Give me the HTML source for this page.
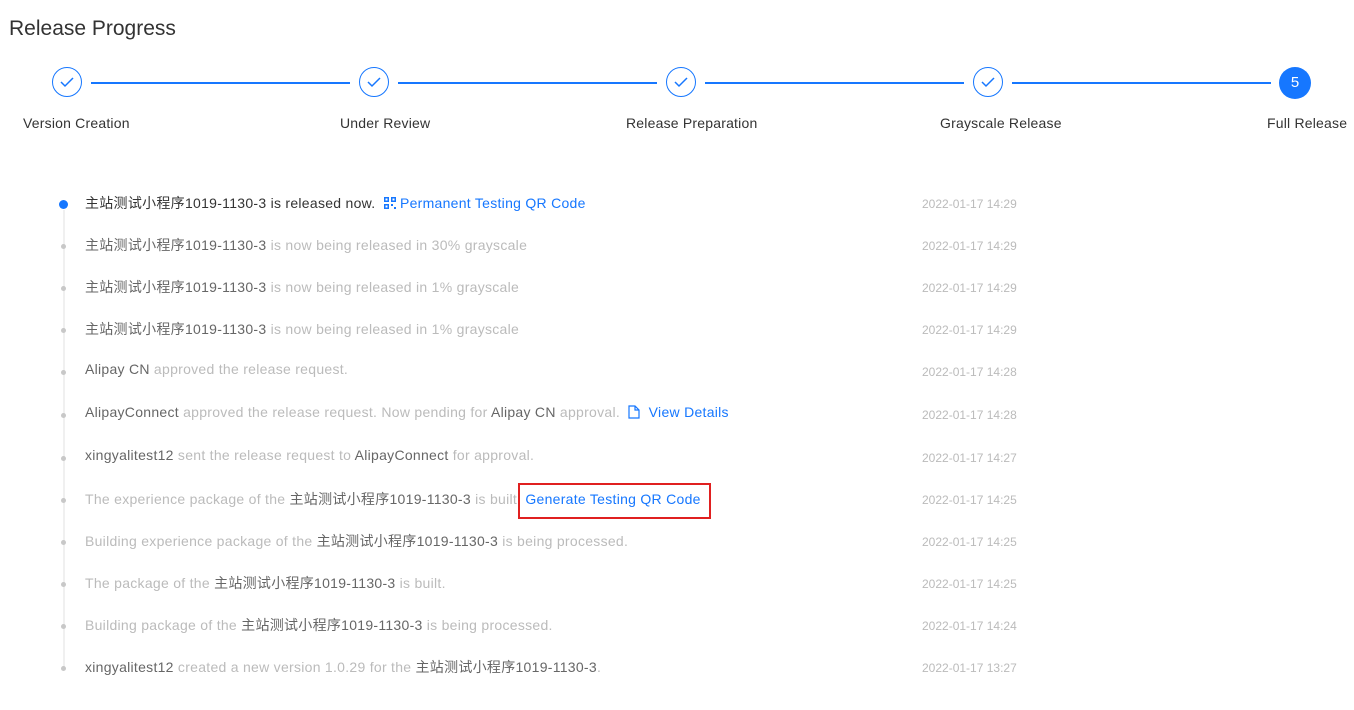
<!DOCTYPE html>
<html><head><meta charset="utf-8"><style>
body{margin:0;width:1354px;height:710px;background:#fff;font-family:"Liberation Sans","Noto Sans CJK SC",sans-serif;position:relative;overflow:hidden}
.a{position:absolute;white-space:nowrap}
.c{position:absolute;width:30px;height:30px;border:1.5px solid #1677ff;border-radius:50%;top:67px;box-sizing:border-box}
.c svg{position:absolute;left:7px;top:8px}
.ln{position:absolute;top:82px;height:1.5px;background:#1677ff}
.lb{position:absolute;top:115px;font-size:14px;color:#333;letter-spacing:.2px}
.row{position:absolute;left:85px;font-size:14px;color:#bbb;white-space:nowrap;letter-spacing:.28px}
.row b{font-weight:normal;color:#666}
.t{position:absolute;left:922px;font-size:12px;color:#bbb}
.d{position:absolute;left:61px;width:5px;height:5px;border-radius:50%;background:#c8c8c8}
a{color:#1677ff;text-decoration:none}
</style></head><body>
<div class="a" style="left:9px;top:17px;font-size:21px;color:#333">Release Progress</div>
<div class="c" style="left:52px"><svg width="14" height="12"><path d="M1 6l4 4 8-8" fill="none" stroke="#1677ff" stroke-width="1.5"/></svg></div>
<div class="c" style="left:359px"><svg width="14" height="12"><path d="M1 6l4 4 8-8" fill="none" stroke="#1677ff" stroke-width="1.5"/></svg></div>
<div class="c" style="left:666px"><svg width="14" height="12"><path d="M1 6l4 4 8-8" fill="none" stroke="#1677ff" stroke-width="1.5"/></svg></div>
<div class="c" style="left:973px"><svg width="14" height="12"><path d="M1 6l4 4 8-8" fill="none" stroke="#1677ff" stroke-width="1.5"/></svg></div>
<div class="c" style="left:1279px;top:67px;width:32px;height:32px;background:#1677ff;border:none;color:#fff;font-size:15px;text-align:center;line-height:32px">5</div>
<div class="ln" style="left:91px;width:259px"></div>
<div class="ln" style="left:398px;width:259px"></div>
<div class="ln" style="left:705px;width:259px"></div>
<div class="ln" style="left:1012px;width:259px"></div>
<div class="lb" style="left:23px">Version Creation</div>
<div class="lb" style="left:340px">Under Review</div>
<div class="lb" style="left:626px">Release Preparation</div>
<div class="lb" style="left:940px">Grayscale Release</div>
<div class="lb" style="left:1267px">Full Release</div>

<div style="position:absolute;left:63px;top:210px;width:2px;height:460px;background:#f0f0f0"></div>
<div class="d" style="left:59px;top:200px;width:9px;height:9px;background:#1677ff"></div>
<div class="d" style="top:244px"></div><div class="d" style="top:286px"></div><div class="d" style="top:328px"></div>
<div class="d" style="top:370px"></div><div class="d" style="top:413px"></div><div class="d" style="top:456px"></div>
<div class="d" style="top:498px"></div><div class="d" style="top:540px"></div><div class="d" style="top:582px"></div>
<div class="d" style="top:624px"></div><div class="d" style="top:666px"></div>

<div class="row" style="top:193px;color:#333">主站测试小程序1019-1130-3 is released now. &nbsp;<a><svg width="12" height="12" style="vertical-align:-1px"><g fill="#1677ff"><rect x="0" y="0" width="5" height="5"/><rect x="7" y="0" width="5" height="5"/><rect x="0" y="7" width="5" height="5"/><rect x="7" y="7" width="2" height="2"/><rect x="10" y="10" width="2" height="2"/></g><rect x="1.5" y="1.5" width="2" height="2" fill="#fff"/><rect x="8.5" y="1.5" width="2" height="2" fill="#fff"/><rect x="1.5" y="8.5" width="2" height="2" fill="#fff"/></svg> Permanent Testing QR Code</a></div>
<div class="row" style="top:235px"><b>主站测试小程序1019-1130-3</b> is now being released in 30% grayscale</div>
<div class="row" style="top:277px"><b>主站测试小程序1019-1130-3</b> is now being released in 1% grayscale</div>
<div class="row" style="top:319px"><b>主站测试小程序1019-1130-3</b> is now being released in 1% grayscale</div>
<div class="row" style="top:361px"><b>Alipay CN</b> approved the release request.</div>
<div class="row" style="top:404px"><b>AlipayConnect</b> approved the release request. Now pending for <b>Alipay CN</b> approval. &nbsp;<a><svg width="12" height="14" style="vertical-align:-2px"><path d="M1 1h6l4 4v8H1z M7 1v4h4" fill="none" stroke="#1677ff" stroke-width="1.2"/></svg> &nbsp;View Details</a></div>
<div class="row" style="top:447px"><b>xingyalitest12</b> sent the release request to <b>AlipayConnect</b> for approval.</div>
<div class="row" style="top:489px">The experience package of the <b>主站测试小程序1019-1130-3</b> is built. <a>Generate Testing QR Code</a></div>
<div style="position:absolute;left:518px;top:483px;width:193px;height:36px;border:2px solid #e02020;box-sizing:border-box"></div>
<div class="row" style="top:531px">Building experience package of the <b>主站测试小程序1019-1130-3</b> is being processed.</div>
<div class="row" style="top:573px">The package of the <b>主站测试小程序1019-1130-3</b> is built.</div>
<div class="row" style="top:615px">Building package of the <b>主站测试小程序1019-1130-3</b> is being processed.</div>
<div class="row" style="top:657px"><b>xingyalitest12</b> created a new version 1.0.29 for the <b>主站测试小程序1019-1130-3</b>.</div>

<div class="t" style="top:197px">2022-01-17 14:29</div>
<div class="t" style="top:239px">2022-01-17 14:29</div>
<div class="t" style="top:281px">2022-01-17 14:29</div>
<div class="t" style="top:323px">2022-01-17 14:29</div>
<div class="t" style="top:365px">2022-01-17 14:28</div>
<div class="t" style="top:408px">2022-01-17 14:28</div>
<div class="t" style="top:451px">2022-01-17 14:27</div>
<div class="t" style="top:493px">2022-01-17 14:25</div>
<div class="t" style="top:535px">2022-01-17 14:25</div>
<div class="t" style="top:577px">2022-01-17 14:25</div>
<div class="t" style="top:619px">2022-01-17 14:24</div>
<div class="t" style="top:661px">2022-01-17 13:27</div>
</body></html>
